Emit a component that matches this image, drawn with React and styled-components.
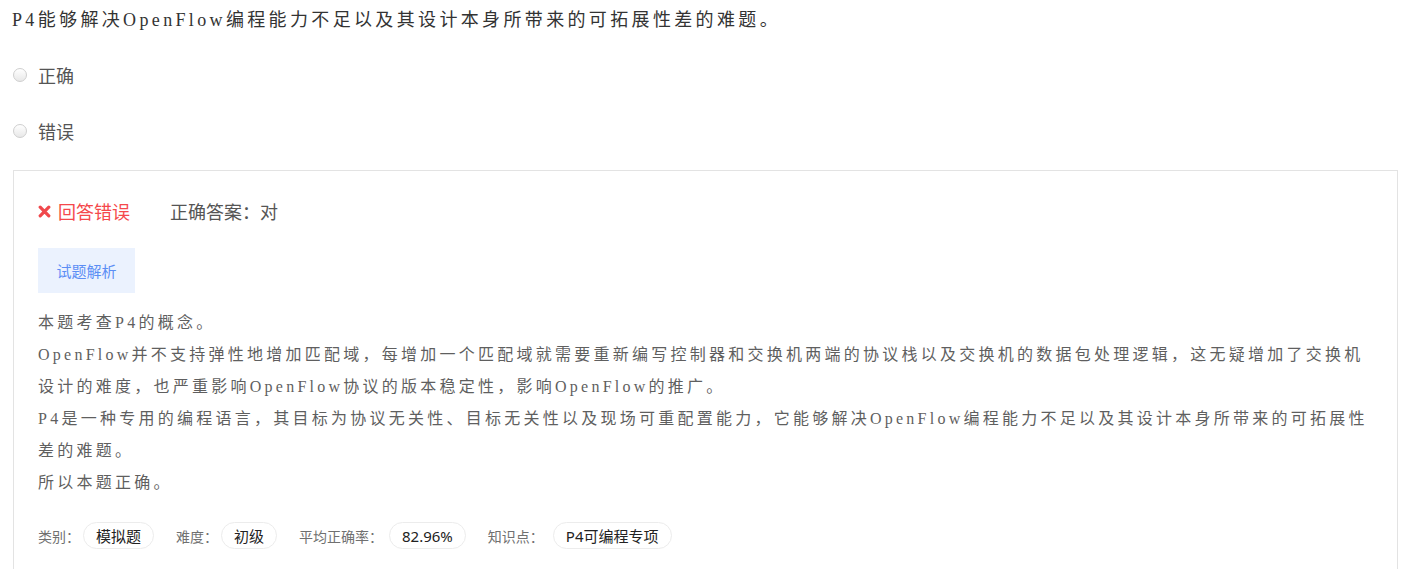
import React from 'react';
import styled, { createGlobalStyle } from 'styled-components';

const Global = createGlobalStyle`
  html, body { margin: 0; padding: 0; background: #fff; }
  body { font-family: "Noto Sans", "Noto Sans CJK SC", sans-serif; }
  * { box-sizing: border-box; }
`;

const Page = styled.div`
  padding: 0 5px 0 13px;
`;

const Question = styled.div`
  font-family: "Liberation Serif", "Noto Sans CJK SC", serif;
  font-size: 18px;
  letter-spacing: 3.35px;
  line-height: 40px;
  color: #333;
  margin-left: -1px;
`;

const Options = styled.div`
  margin-top: 7px;
  display: flex;
  flex-direction: column;
`;

const Option = styled.label`
  display: flex;
  align-items: center;
  gap: 11px;
  height: 56px;
  font-family: "Noto Sans", "Noto Sans CJK SC", sans-serif;
  font-size: 18px;
  color: #555;
`;

const Radio = styled.span`
  width: 14px;
  height: 14px;
  border-radius: 50%;
  border: 1px solid #cfcfcf;
  background: linear-gradient(#ffffff, #e8e8e8);
  flex: none;
`;

const Card = styled.div`
  margin-top: 11px;
  border: 1px solid #e3e3e3;
  padding: 20px 24px 40px;
`;

const ResultRow = styled.div`
  display: flex;
  align-items: center;
  height: 40px;
  font-size: 18px;
`;

const Wrong = styled.span`
  display: flex;
  align-items: center;
  gap: 7px;
  color: #f5484b;
`;

const Answer = styled.span`
  margin-left: 40px;
  color: #555;
`;

const Tab = styled.div`
  margin-top: 17px;
  width: 97px;
  height: 45px;
  display: flex;
  align-items: center;
  justify-content: center;
  background: #ebf2fe;
  color: #5b8ef5;
  font-size: 15px;
`;

const Explain = styled.div`
  margin-top: 14px;
  font-family: "Liberation Serif", "Noto Sans CJK SC", serif;
  font-size: 16px;
  letter-spacing: 3.25px;
  line-height: 32px;
  color: #5f5f5f;
`;

const Footer = styled.div`
  margin-top: 23px;
  display: flex;
  align-items: center;
  gap: 22px;
  font-size: 15px;
`;

const Meta = styled.div`
  display: flex;
  align-items: center;
`;

const Label = styled.span`
  color: #707070;
  font-size: 14px;
  margin-right: ${p => p.$gap ?? 3}px;
`;

const Pill = styled.span`
  height: 27px;
  padding: 0 12px;
  border: 1px solid #ececec;
  border-radius: 14px;
  display: flex;
  align-items: center;
  color: #222;
  font-size: 15px;
`;

const CrossIcon = () => (
  <svg width="13" height="13" viewBox="0 0 13 13" aria-hidden="true">
    <path d="M2.2 2.2 L10.8 10.8 M10.8 2.2 L2.2 10.8" stroke="#f0484c" strokeWidth="3.2" strokeLinecap="round" />
  </svg>
);

const meta = [
  { label: '类别：', value: '模拟题' },
  { label: '难度：', value: '初级' },
  { label: '平均正确率：', value: '82.96%', gap: 6 },
  { label: '知识点：', value: 'P4可编程专项', gap: 9 },
];

export default function App() {
  return (
    <>
      <Global />
      <Page>
        <Question>P4能够解决OpenFlow编程能力不足以及其设计本身所带来的可拓展性差的难题。</Question>
        <Options>
          <Option><Radio />正确</Option>
          <Option><Radio />错误</Option>
        </Options>
        <Card>
          <ResultRow>
            <Wrong><CrossIcon />回答错误</Wrong>
            <Answer>正确答案：对</Answer>
          </ResultRow>
          <Tab>试题解析</Tab>
          <Explain>
            <div>本题考查P4的概念。</div>
            <div>OpenFlow并不支持弹性地增加匹配域，每增加一个匹配域就需要重新编写控制器和交换机两端的协议栈以及交换机的数据包处理逻辑，这无疑增加了交换机设计的难度，也严重影响OpenFlow协议的版本稳定性，影响OpenFlow的推广。</div>
            <div>P4是一种专用的编程语言，其目标为协议无关性、目标无关性以及现场可重配置能力，它能够解决OpenFlow编程能力不足以及其设计本身所带来的可拓展性差的难题。</div>
            <div>所以本题正确。</div>
          </Explain>
          <Footer>
            {meta.map(m => (
              <Meta key={m.label}>
                <Label $gap={m.gap}>{m.label}</Label>
                <Pill>{m.value}</Pill>
              </Meta>
            ))}
          </Footer>
        </Card>
      </Page>
    </>
  );
}
